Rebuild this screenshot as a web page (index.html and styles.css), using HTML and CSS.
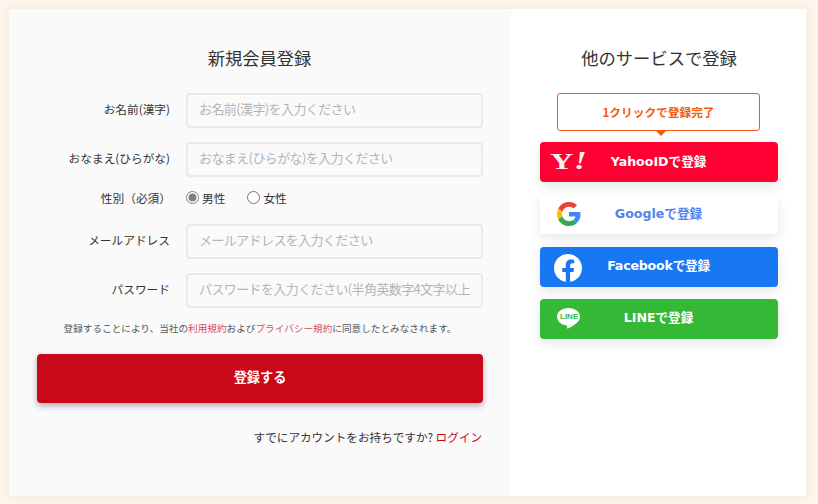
FILE: index.html
```html
<!DOCTYPE html>
<html lang="ja">
  <head>
    <meta charset="UTF-8" />
    <title>新規会員登録</title>
    <link rel="stylesheet" href="styles.css">
  </head>
  <body>
    <div class="card">
      <div class="left">
        <h2 class="title">新規会員登録</h2>
        <div class="row">
          <label class="label">お名前(漢字)</label>
          <input class="input" type="text" placeholder="お名前(漢字)を入力ください">
        </div>
        <div class="row">
          <label class="label">おなまえ(ひらがな)</label>
          <input class="input" type="text" placeholder="おなまえ(ひらがな)を入力ください">
        </div>
        <div class="row rowRadio">
          <label class="label labelGender">性別（必須）</label>
          <div class="radios">
            <label class="radio"><input type="radio" name="gender" checked>男性</label>
            <label class="radio"><input type="radio" name="gender">女性</label>
          </div>
        </div>
        <div class="row">
          <label class="label">メールアドレス</label>
          <input class="input" type="text" placeholder="メールアドレスを入力ください">
        </div>
        <div class="row">
          <label class="label">パスワード</label>
          <input class="input" type="password" placeholder="パスワードを入力ください(半角英数字4文字以上">
        </div>
        <p class="terms">登録することにより、当社の<a href="#">利用規約</a>および<a href="#">プライバシー規約</a>に同意したとみなされます。</p>
        <button class="submit">登録する</button>
        <p class="login">すでにアカウントをお持ちですか? <a href="#">ログイン</a></p>
      </div>
      <div class="right">
        <h2 class="title">他のサービスで登録</h2>
        <div class="balloon">1クリックで登録完了</div>
        <a class="sns yahoo" href="#">
          <span class="yahooLogo">Y</span>
          <span class="yahooMark">!</span>
          <span class="snsText">YahooIDで登録</span>
        </a>
        <a class="sns google" href="#">
          <svg class="icon" width="24" height="24" viewBox="0 0 48 48">
            <path fill="#EA4335" d="M24 9.500c3.540 0 6.710 1.220 9.210 3.600l6.850-6.850C35.900 2.380 30.470 0 24 0 14.620 0 6.510 5.380 2.560 13.220l7.980 6.190C12.430 13.720 17.740 9.500 24 9.500z"/>
            <path fill="#4285F4" d="M46.980 24.550c0-1.570-.15-3.090-.38-4.550H24v9.020h12.940c-.58 2.960-2.260 5.480-4.780 7.180l7.730 6c4.510-4.180 7.090-10.360 7.090-17.650z"/>
            <path fill="#FBBC05" d="M10.530 28.590c-.48-1.450-.76-2.990-.76-4.590s.27-3.140.76-4.590l-7.980-6.190C.92 16.460 0 20.120 0 24c0 3.880.92 7.540 2.560 10.780l7.970-6.190z"/>
            <path fill="#34A853" d="M24 48c6.480 0 11.930-2.130 15.890-5.810l-7.730-6c-2.150 1.450-4.920 2.300-8.160 2.300-6.260 0-11.570-4.220-13.470-9.910l-7.980 6.190C6.510 42.620 14.620 48 24 48z"/>
          </svg>
          <span class="snsText">Googleで登録</span>
        </a>
        <a class="sns facebook" href="#">
          <svg class="icon" width="28" height="28" viewBox="0 0 28 28">
            <path fill="#fff" d="M28 14C28 6.300 21.700 0 14 0S0 6.300 0 14c0 7 5.100 12.800 11.800 13.800V18h-3.500v-4h3.500v-3.100c0-3.500 2.100-5.400 5.300-5.400 1.500 0 3.100.3 3.100.3v3.400h-1.800c-1.700 0-2.300 1.100-2.300 2.200V14h3.900l-.6 4h-3.300v9.800C22.900 26.800 28 21 28 14z"/>
          </svg>
          <span class="snsText">Facebookで登録</span>
        </a>
        <a class="sns line" href="#">
          <svg class="icon" width="23" height="23" viewBox="0 0 23 23">
            <path fill="#fff" d="M11.500 0C5.100 0 0 3.900 0 8.800c0 4.400 4 8 9.500 8.700.9.200.7 1 .6 1.800-.1.700-.1 1.600.9 1.200 2.200-.9 6.200-3.400 8.300-5.300C21.800 13.500 23 11.300 23 8.800 23 3.900 17.900 0 11.500 0z"/>
          </svg>
          <span class="lineMark">LINE</span>
          <span class="snsText">LINEで登録</span>
        </a>
      </div>
    </div>
  </body>
</html>
```

FILE: styles.css
```css
* {
  margin: 0;
  padding: 0;
  box-sizing: border-box;
}
body {
  width: 818px;
  height: 504px;
  padding: 9px 12px 8px 9px;
  background: #fdf5ea;
  font-family: "Noto Sans CJK JP", "Noto Sans", sans-serif;
  color: #333333;
  overflow: hidden;
}
a {
  text-decoration: none;
}
.card {
  display: flex;
  height: 487px;
  background: #ffffff;
  box-shadow: 0 0 10px rgba(120, 90, 50, 0.08);
}
.left {
  width: 502px;
  padding: 36px 28px 0 28px;
  background: #fafafa;
}
.right {
  flex: 1;
  padding: 36px 28px 0 29px;
}
.title {
  font-size: 17.3px;
  font-weight: 400;
  line-height: 26px;
  text-align: center;
  color: #333333;
  margin-bottom: 22px;
}
.left .title {
  padding-right: 1px;
}
.row {
  display: flex;
  align-items: center;
  margin-bottom: 14px;
}
.rowRadio {
  height: 20px;
  margin-top: -2px;
  margin-bottom: 15px;
}
.label {
  width: 133px;
  margin-right: 16px;
  font-size: 11.7px;
  line-height: 18px;
  text-align: right;
  margin-top: -3px;
}
.labelGender {
  width: 134px;
  margin-top: -2px;
  margin-right: 15px;
}
.input {
  width: 297px;
  height: 35px;
  padding: 0 11px 4px;
  font-family: inherit;
  font-size: 13px;
  letter-spacing: -0.6px;
  background: #fafafa;
  border: 2px solid #e8eaee;
  border-radius: 4px;
  outline: none;
}
.input::placeholder {
  color: #b0b4bb;
}
.radios {
  display: flex;
  gap: 22px;
}
.radio {
  display: flex;
  align-items: center;
  font-size: 11.7px;
  margin-top: -3px;
}
.radio input {
  width: 13px;
  height: 13px;
  margin: 0 3px 1px 0;
  accent-color: #808080;
}
.terms {
  margin-top: -2px;
  font-size: 9.65px;
  line-height: 16px;
  text-align: center;
  color: #555555;
}
.terms a {
  color: #d4505e;
}
.submit {
  display: block;
  width: 100%;
  height: 49px;
  padding-bottom: 4px;
  margin-top: 18px;
  font-family: inherit;
  font-size: 13.2px;
  font-weight: 700;
  color: #ffffff;
  background: #c90819;
  border: none;
  border-radius: 4px;
  box-shadow: 0 3px 6px rgba(0, 0, 0, 0.3);
}
.login {
  margin-top: 25px;
  padding-right: 1px;
  font-size: 11.6px;
  line-height: 18px;
  text-align: right;
}
.login a {
  color: #c90819;
}
.balloon {
  position: relative;
  width: 203px;
  height: 38px;
  margin: 0 0 11px 17px;
  font-size: 11.7px;
  font-weight: 700;
  line-height: 35px;
  text-align: center;
  color: #f55a0f;
  border: 1px solid #f55a0f;
  border-radius: 3px;
}
.balloon::after {
  content: "";
  position: absolute;
  left: 98px;
  bottom: -6px;
  border-top: 5px solid #f55a0f;
  border-left: 5px solid transparent;
  border-right: 5px solid transparent;
}
.sns {
  position: relative;
  display: flex;
  align-items: center;
  justify-content: center;
  width: 238px;
  height: 40px;
  margin-bottom: 13px;
  border-radius: 4px;
  box-shadow: 0 4px 12px rgba(0, 0, 0, 0.1);
  color: #ffffff;
}
.snsText {
  font-family: "DejaVu Sans", "Noto Sans CJK JP", sans-serif;
  font-size: 12.6px;
  font-weight: 700;
  margin-bottom: 3px;
  padding-right: 1px;
}
.icon {
  position: absolute;
  left: 17px;
  top: 7px;
}
.yahoo {
  background: #ff0033;
}
.yahooLogo {
  position: absolute;
  left: 10px;
  top: 6px;
  font-family: "Liberation Serif", serif;
  font-size: 24px;
  font-weight: 700;
  line-height: 26px;
  transform: scaleX(1.35);
  transform-origin: left;
  color: #ffeef1;
}
.yahooMark {
  position: absolute;
  left: 34px;
  top: 6px;
  font-family: "Liberation Serif", serif;
  font-size: 25px;
  font-weight: 700;
  font-style: italic;
  line-height: 26px;
  transform: scaleX(1.3);
  transform-origin: left;
  color: #ffeef1;
}
.google {
  height: 39px;
  background: #ffffff;
}
.google .snsText {
  margin-bottom: 5px;
  color: #5383ec;
}
.facebook {
  margin-bottom: 12px;
  background: #1877f2;
}
.facebook .icon {
  left: 14px;
  top: 7px;
}
.facebook .snsText {
  letter-spacing: -0.2px;
}
.facebook .snsText,
.line .snsText {
  margin-bottom: 5px;
}
.line {
  background: #35b835;
}
.line .icon {
  left: 17px;
  top: 9px;
}
.lineMark {
  position: absolute;
  left: 20px;
  top: 12px;
  font-family: "Liberation Sans", sans-serif;
  font-size: 8px;
  font-weight: 700;
  line-height: 12px;
  color: #35b835;
}
```
